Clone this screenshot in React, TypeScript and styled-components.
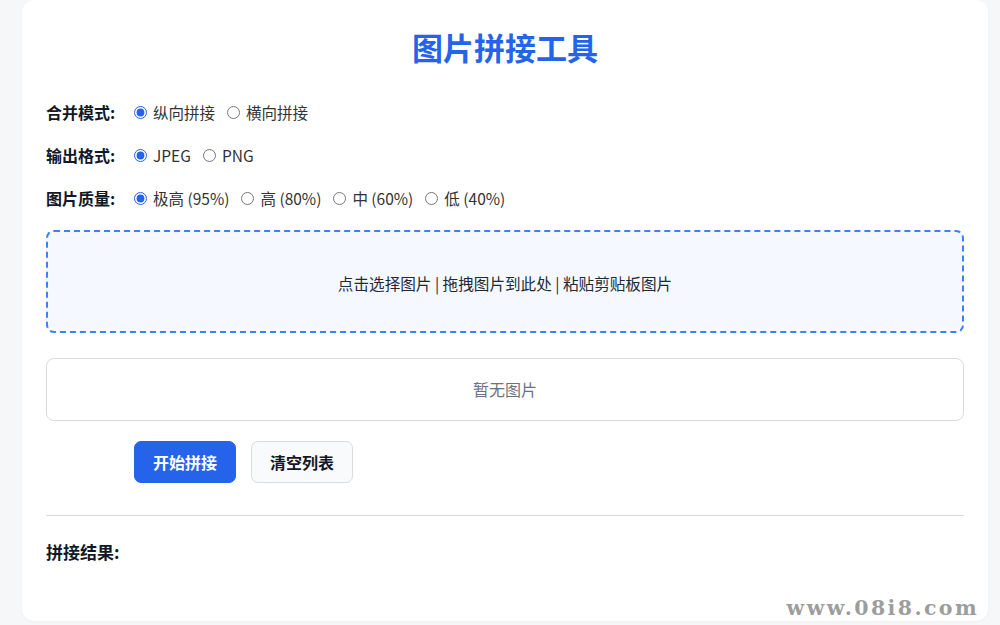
import styled, { createGlobalStyle } from "styled-components";
import { useState } from "react";

const GlobalStyle = createGlobalStyle`
  * {
    box-sizing: border-box;
  }

  body {
    margin: 0;
    background: #f6f7f9;
    font-family: "Noto Sans CJK SC", "Noto Sans", sans-serif;
    color: #1f2937;
  }
`;

const Page = styled.div`
  position: relative;
  width: 1000px;
  height: 625px;
  overflow: hidden;
`;

const Card = styled.div`
  margin-left: 22px;
  width: 966px;
  height: 621px;
  background: #ffffff;
  border-radius: 12px;
  box-shadow: 0 1px 3px rgba(0, 0, 0, 0.04);
  padding: 27px 24px 24px;
`;

const Title = styled.h1`
  margin: 0 0 34px;
  font-size: 31px;
  line-height: 40px;
  font-weight: 700;
  color: #2563eb;
  text-align: center;
`;

const Row = styled.div`
  display: flex;
  align-items: center;
  height: 22px;
  margin-bottom: 21px;
`;

const Label = styled.span`
  width: 88px;
  flex-shrink: 0;
  font-size: 16px;
  font-weight: 700;
  color: #111827;
`;

const Option = styled.label`
  display: inline-flex;
  align-items: center;
  gap: 6px;
  margin-right: 12px;
  font-size: 15.5px;
  color: #333333;
  cursor: pointer;

  input {
    margin: 0;
    width: 13px;
    height: 13px;
    accent-color: #2563eb;
  }
`;

const DropZone = styled.div`
  margin-top: 3px;
  border: 2px dashed #3b82f6;
  border-radius: 8px;
  background: #f5f8ff;
  padding: 41px 20px 37px;
  line-height: 21px;
  font-size: 15.6px;
  color: #1f2937;
  text-align: center;
`;

const ImageList = styled.div`
  margin-top: 25px;
  border: 1px solid #d8dbe0;
  border-radius: 8px;
  padding: 20px;
  line-height: 21px;
  font-size: 16px;
  color: #6b7280;
  text-align: center;
`;

const Actions = styled.div`
  display: flex;
  gap: 15px;
  margin-top: 20px;
  padding-left: 88px;
`;

const Button = styled.button<{ $primary?: boolean }>`
  height: 42px;
  padding: 0 18px;
  border-radius: 7px;
  border: 1px solid ${(p) => (p.$primary ? "#2563eb" : "#d8dbe0")};
  background: ${(p) => (p.$primary ? "#2563eb" : "#f9fafb")};
  color: ${(p) => (p.$primary ? "#ffffff" : "#111827")};
  font-family: inherit;
  font-size: 16px;
  font-weight: 700;
  cursor: pointer;
`;

const Divider = styled.hr`
  margin: 32px 0 0;
  border: none;
  border-top: 1px solid #d8dbe0;
`;

const ResultTitle = styled.h3`
  margin: 24px 0 0;
  font-size: 17px;
  line-height: 24px;
  font-weight: 700;
  color: #111827;
`;

const Watermark = styled.div`
  position: absolute;
  right: 21px;
  bottom: 5px;
  font-family: "DejaVu Serif", "Liberation Serif", serif;
  font-weight: 700;
  font-size: 20.5px;
  letter-spacing: 2.4px;
  color: rgba(130, 130, 130, 0.8);
  pointer-events: none;
`;

const modes = ["纵向拼接", "横向拼接"];
const formats = ["JPEG", "PNG"];
const qualities = ["极高 (95%)", "高 (80%)", "中 (60%)", "低 (40%)"];

export default function App() {
  const [mode, setMode] = useState(modes[0]);
  const [format, setFormat] = useState(formats[0]);
  const [quality, setQuality] = useState(qualities[0]);

  return (
    <Page>
      <GlobalStyle />
      <Card>
        <Title>图片拼接工具</Title>

        <Row>
          <Label>合并模式:</Label>
          {modes.map((m) => (
            <Option key={m}>
              <input
                type="radio"
                name="mode"
                checked={mode === m}
                onChange={() => setMode(m)}
              />
              {m}
            </Option>
          ))}
        </Row>

        <Row>
          <Label>输出格式:</Label>
          {formats.map((f) => (
            <Option key={f}>
              <input
                type="radio"
                name="format"
                checked={format === f}
                onChange={() => setFormat(f)}
              />
              {f}
            </Option>
          ))}
        </Row>

        <Row>
          <Label>图片质量:</Label>
          {qualities.map((q) => (
            <Option key={q}>
              <input
                type="radio"
                name="quality"
                checked={quality === q}
                onChange={() => setQuality(q)}
              />
              {q}
            </Option>
          ))}
        </Row>

        <DropZone>点击选择图片 | 拖拽图片到此处 | 粘贴剪贴板图片</DropZone>

        <ImageList>暂无图片</ImageList>

        <Actions>
          <Button $primary>开始拼接</Button>
          <Button>清空列表</Button>
        </Actions>

        <Divider />

        <ResultTitle>拼接结果:</ResultTitle>
      </Card>
      <Watermark>www.08i8.com</Watermark>
    </Page>
  );
}
